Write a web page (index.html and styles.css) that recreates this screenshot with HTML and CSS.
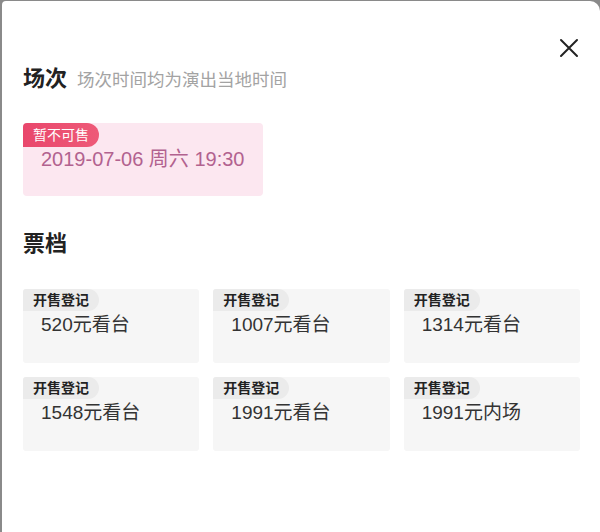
FILE: index.html
```html
<!DOCTYPE html>
<html>
<head>
  <title>场次票档</title>
  <link rel="stylesheet" href="styles.css">
</head>
<body>

<div class="sheet">
  <div class="top">
    <button type="button" class="close" aria-label="关闭">
      <svg width="20" height="20" viewBox="0 0 20 20"><path d="M2 2 L18 18 M18 2 L2 18" stroke="#222" stroke-width="2" stroke-linecap="round" fill="none"/></svg>
    </button>
  </div>

  <div class="title-row">
    <h2 class="title">场次</h2>
    <span class="hint">场次时间均为演出当地时间</span>
  </div>

  <div class="session">
    <span class="session-tag">暂不可售</span>
    <p class="session-date">2019-07-06 周六 19:30</p>
  </div>

  <h2 class="title section">票档</h2>

  <div class="tickets">
    <div class="ticket"><span class="ticket-tag">开售登记</span><p class="price">520元看台</p></div>
    <div class="ticket"><span class="ticket-tag">开售登记</span><p class="price">1007元看台</p></div>
    <div class="ticket"><span class="ticket-tag">开售登记</span><p class="price">1314元看台</p></div>
    <div class="ticket"><span class="ticket-tag">开售登记</span><p class="price">1548元看台</p></div>
    <div class="ticket"><span class="ticket-tag">开售登记</span><p class="price">1991元看台</p></div>
    <div class="ticket"><span class="ticket-tag">开售登记</span><p class="price">1991元内场</p></div>
  </div>
</div>

</body>
</html>
```

FILE: styles.css
```css
html, body {
  margin: 0;
  height: 100%;
}

body {
  background: #8a8a8a;
  font-family: "Liberation Sans", "Noto Sans CJK SC", sans-serif;
  color: #222;
}

.sheet {
  box-sizing: border-box;
  height: calc(100% - 1px);
  margin: 1px 0 0 2px;
  padding: 0 20px 0 21px;
  background: #fff;
  border-radius: 4px 10px 0 0;
}

.top {
  display: flex;
  justify-content: flex-end;
  padding-top: 37px;
}

.close {
  border: none;
  background: none;
  padding: 0;
  width: 20px;
  height: 20px;
  margin-right: 1px;
  cursor: pointer;
}

.close svg {
  display: block;
}

.title-row {
  display: flex;
  align-items: baseline;
  margin-top: 6px;
}

.title {
  margin: 0;
  font-size: 22px;
  line-height: 30px;
  font-weight: 700;
  color: #222;
}

.hint {
  margin-left: 10px;
  font-size: 17.5px;
  color: #a3a3a3;
}

.session {
  width: 240px;
  height: 73px;
  margin-top: 29px;
  background: #fce7f0;
  border-radius: 4px;
}

.session-tag {
  display: inline-block;
  height: 24px;
  line-height: 24px;
  padding: 0 10px;
  font-size: 14px;
  color: #fff;
  background: linear-gradient(90deg, #e9476c, #ee5a78);
  border-radius: 4px 12px 12px 0;
}

.session-date {
  margin: 0 0 0 18px;
  font-size: 20px;
  line-height: 24px;
  color: #b2628f;
}

.section {
  margin-top: 33px;
}

.tickets {
  display: grid;
  grid-template-columns: repeat(3, 1fr);
  gap: 14px;
  margin-top: 30px;
}

.ticket {
  height: 74px;
  background: #f6f6f6;
  border-radius: 3px;
}

.ticket-tag {
  display: inline-block;
  height: 22px;
  line-height: 22px;
  padding: 0 10px;
  font-size: 14px;
  font-weight: 700;
  color: #222;
  background: #ebebeb;
  border-radius: 3px 11px 11px 0;
}

.price {
  margin: 2px 0 0 18px;
  font-size: 19px;
  line-height: 24px;
  color: #333;
}
```
